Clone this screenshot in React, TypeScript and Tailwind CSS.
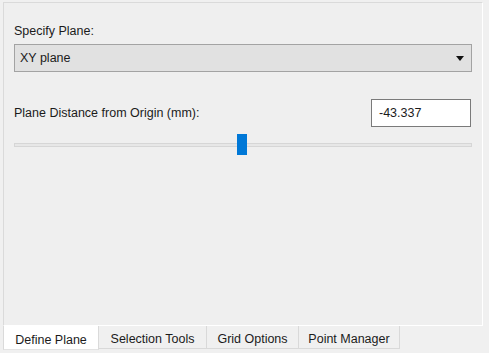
import React, { useState } from "react";

const tabs = [
  { label: "Define Plane", w: "w-[96px]" },
  { label: "Selection Tools", w: "w-[108px]" },
  { label: "Grid Options", w: "w-[92px]" },
  { label: "Point Manager", w: "w-[101px]" },
];

const App = () => {
  const [active, setActive] = useState(0);

  return (
    <main className="w-[489px] h-[353px] bg-[#f0f0f0] pt-[2px] pl-[3px] font-['Liberation_Sans',Arial,sans-serif] text-[12.5px] text-[#1b1b1b] overflow-hidden">
      <section className="w-[480px] h-[324px] bg-[#efefef] border-l border-t border-[#dadada] border-r border-r-white border-b border-b-white pl-[10px] pt-[20px]">
        <p className="leading-[16px]">Specify Plane:</p>

        <div className="mt-[5px] w-[458px] h-[28px] bg-[#e1e1e1] border border-[#a3a3a3] flex items-center justify-between pl-[5px] pr-[7px]">
          <span>XY plane</span>
          <svg width="8" height="5" viewBox="0 0 8 5">
            <path d="M0 0h8L4 5z" fill="#111" />
          </svg>
        </div>

        <div className="mt-[27px] w-[457px] h-[28px] flex items-center justify-between">
          <span className="leading-[16px]">Plane Distance from Origin (mm):</span>
          <div className="w-[100px] h-[28px] bg-white border border-[#7a7a7a] flex items-center pl-[7px]">
            -43.337
          </div>
        </div>

        <div className="relative mt-[7px] w-[458px] h-[21px] flex items-center">
          <div className="w-full h-[4px] bg-[#e7e7e7] border border-[#d6d6d6]" />
          <div className="absolute left-[223px] top-0 w-[10px] h-[21px] bg-[#0078d7]" />
        </div>
      </section>

      <nav className="flex h-[24px]">
        {tabs.map((t, i) => (
          <button
            key={t.label}
            onClick={() => setActive(i)}
            className={
              i === active
                ? `${t.w} h-[24px] bg-white border-l border-[#dadada] border-r border-b border-b-[#e3e3e3] text-center leading-[16px] pt-[5px]`
                : `${t.w} h-[23px] bg-[#f0f0f0] border-r border-b border-[#d9d9d9] text-center leading-[16px] pt-[3px]`
            }
          >
            {t.label}
          </button>
        ))}
      </nav>
    </main>
  );
};

export default App;
